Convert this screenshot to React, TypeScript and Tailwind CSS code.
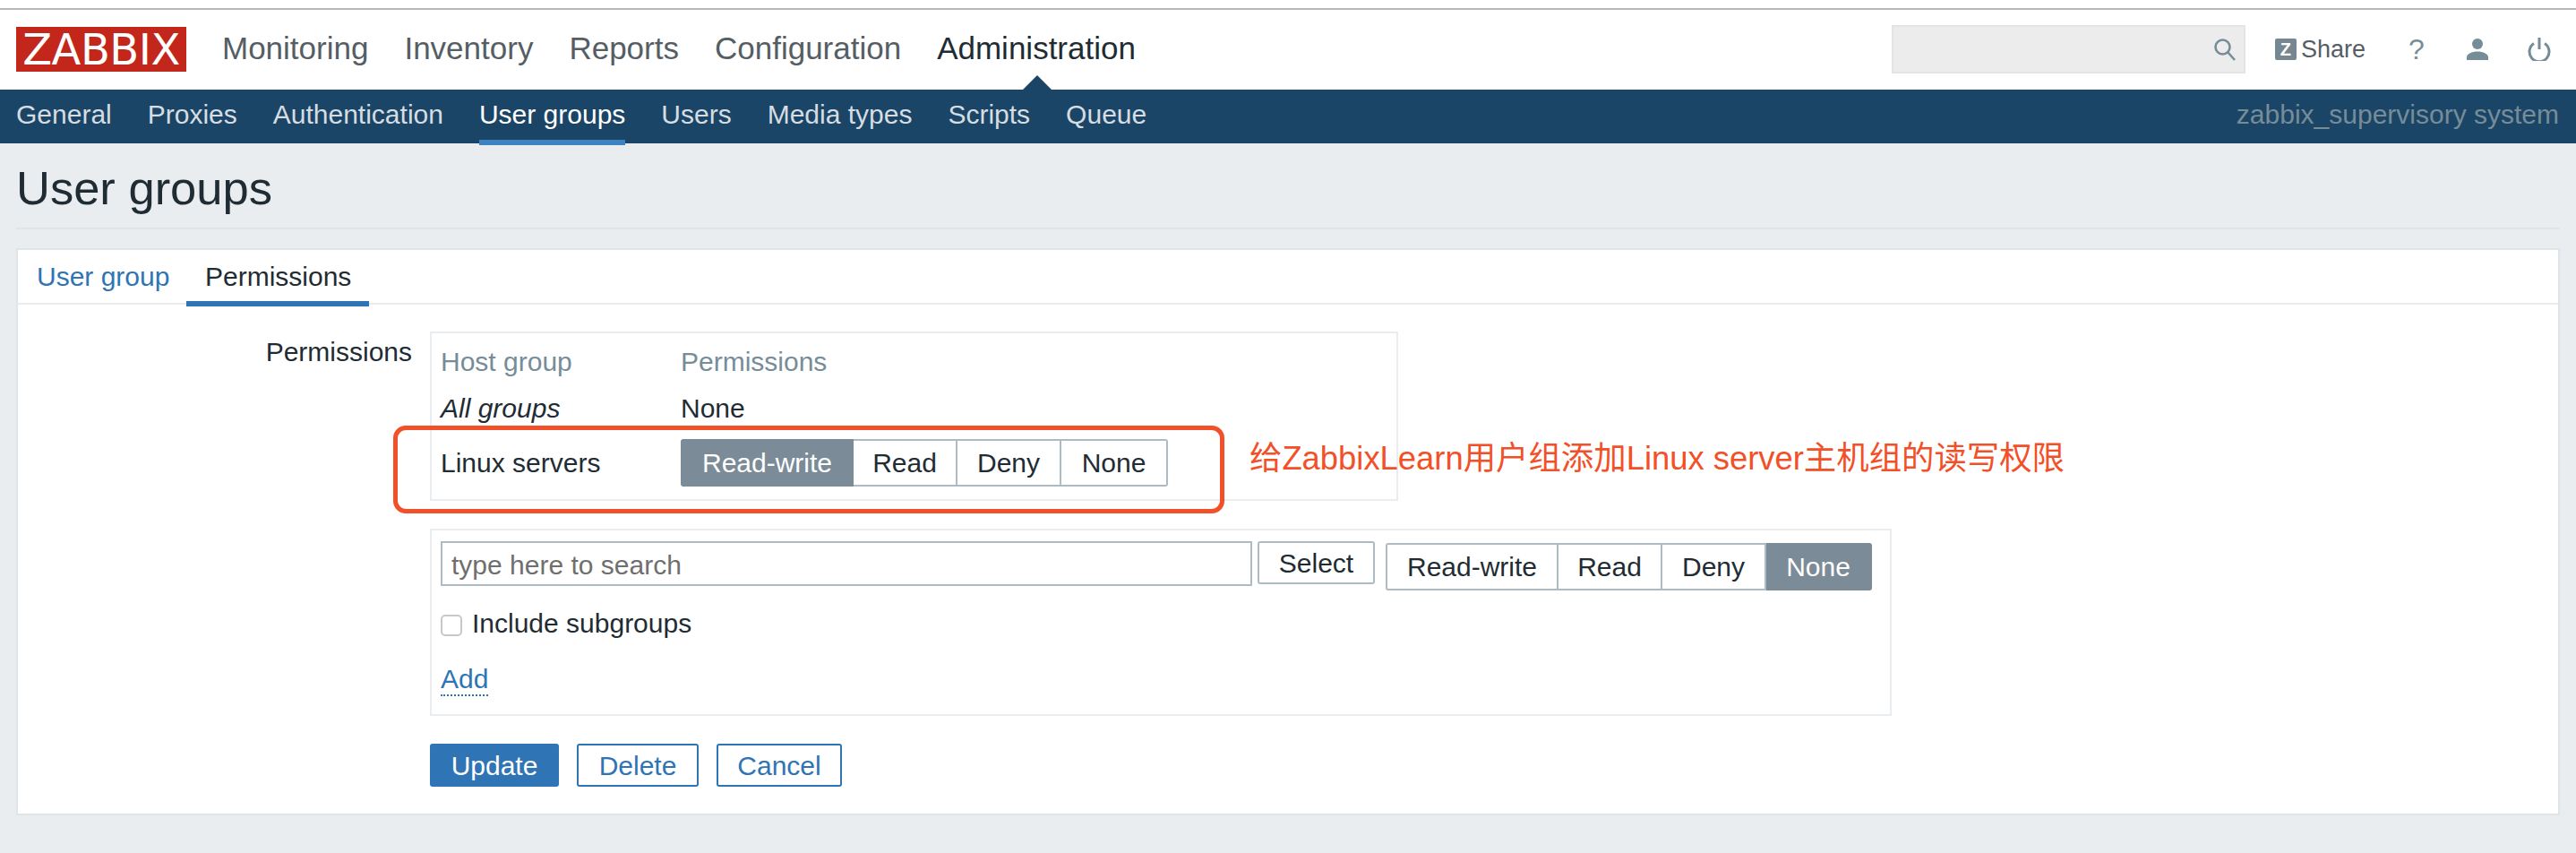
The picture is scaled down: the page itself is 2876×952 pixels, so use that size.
import React from "react";

const F = '"Liberation Sans", Arial, "Noto Sans CJK SC", sans-serif';

function Seg({ items, active }: { items: { t: string; w: number }[]; active: string }) {
  return (
    <div className="flex h-[53px]">
      {items.map((it, i) => (
        <div
          key={it.t}
          style={{ width: it.w }}
          className={
            "flex items-center justify-center text-[30px] border-y-2 " +
            (i === 0 ? "rounded-l-[3px] border-l-2 " : "") +
            (i === items.length - 1 ? "rounded-r-[3px] border-r-2 " : "border-r-2 ") +
            (it.t === active
              ? "bg-[#7b8b97] border-[#7b8b97] text-white"
              : "bg-white border-[#acbbc4] text-[#1f2c33]")
          }
        >
          {it.t}
        </div>
      ))}
    </div>
  );
}

export default function App() {
  return (
    <div className="relative w-[2876px] h-[952px] bg-[#e9edf0] overflow-hidden" style={{ fontFamily: F }}>
      <div className="h-[9px] bg-white" />
      <div className="h-[91px] bg-white border-t-2 border-[#b8b8b8] flex items-center pl-[18px] pr-[28px] relative">
        <div className="w-[190px] h-[50px] bg-[#c3261a] text-white flex items-center justify-center text-[48px] leading-none tracking-[-0.5px] mt-[-1px]" style={{ fontFamily: '"DejaVu Sans", sans-serif' }}>
          ZABBIX
        </div>
        <div className="flex gap-[40px] ml-[40px] text-[35px] text-[#555e65] mt-[-2px]">
          <span>Monitoring</span>
          <span>Inventory</span>
          <span>Reports</span>
          <span>Configuration</span>
          <span className="text-[#1f2c33]">Administration</span>
        </div>
        <div className="absolute left-[1142px] bottom-0 w-0 h-0 border-x-[16px] border-x-transparent border-b-[16px] border-b-[#1b4566]" />
        <div className="ml-auto flex items-center mt-[-1px]">
          <div className="w-[395px] h-[54px] bg-[#ececec] border-2 border-[#e4e4e4] flex items-center justify-end pr-[8px]">
            <svg width="26" height="26" viewBox="0 0 26 26" fill="none" stroke="#768d99" strokeWidth="2.6">
              <circle cx="10.5" cy="10.5" r="8" />
              <path d="M16 16l8 9" />
            </svg>
          </div>
          <div className="flex items-center ml-[33px]">
            <div className="w-[24px] h-[24px] rounded-[2px] bg-[#768791] text-white text-[20px] font-bold flex items-center justify-center leading-none">Z</div>
            <span className="ml-[5px] text-[27px] text-[#555e65]">Share</span>
          </div>
          <span className="ml-[48px] text-[32px] text-[#768d99] w-[16px] text-center">?</span>
          <svg className="ml-[48px]" width="26" height="24" viewBox="0 0 26 24" fill="#768d99">
            <circle cx="13" cy="6" r="6" />
            <path d="M1 24v-3c0-4 6-6.500 12-6.500S25 17 25 21v3z" />
          </svg>
          <svg className="ml-[43px]" width="26" height="26" viewBox="0 0 26 26" fill="none" stroke="#768d99" strokeWidth="3">
            <path d="M7 6.500a11 11 0 1 0 12 0" />
            <path d="M13 0v13" />
          </svg>
        </div>
      </div>

      <div className="h-[60px] bg-[#1b4566] flex items-start pl-[18px] pr-[19px] text-[30px] text-[#d5dde3] relative">
        <div className="flex gap-[40px] h-[62px]">
          {["General", "Proxies", "Authentication", "User groups", "Users", "Media types", "Scripts", "Queue"].map((t) => (
            <span
              key={t}
              className={
                "pt-[11px] leading-[34px] " +
                (t === "User groups" ? "text-white border-b-[6px] border-[#3d82c2] h-[62px]" : "")
              }
            >
              {t}
            </span>
          ))}
        </div>
        <span className="ml-auto pt-[11px] leading-[34px] text-[#768d99]">zabbix_supervisory system</span>
      </div>

      <div className="mx-[18px]">
        <div className="h-[96px] border-b-2 border-[#dfe4e7] text-[52.500px] leading-[60px] pt-[20px] text-[#1f2c33]">User groups</div>
        <div className="mt-[21px] h-[633px] bg-white border-2 border-[#dfe4e7]">
          <div className="h-[61px] border-b-2 border-[#e9edf0] flex text-[30px] relative">
            <span className="w-[188px] pl-[21px] pt-[13px] text-[#2f74b4] leading-[34px]">User group</span>
            <span className="w-[204px] h-[63px] pl-[21px] pt-[13px] leading-[34px] text-[#1f2c33] border-b-[6px] border-[#2f74b4]">Permissions</span>
          </div>

          <div className="flex pt-[30px] text-[30px] text-[#1f2c33]">
            <div className="w-[440px] text-right pr-0 leading-[34px] pt-[6px]">Permissions</div>
            <div className="ml-[20px]">
              <div className="w-[1081px] h-[189px] border-2 border-[#e9edf0] pl-[10px]">
                <div className="flex pt-[15px] leading-[34px] text-[#768d99]">
                  <span className="w-[268px]">Host group</span>
                  <span>Permissions</span>
                </div>
                <div className="flex pt-[18px] leading-[34px]">
                  <span className="w-[268px] italic">All groups</span>
                  <span>None</span>
                </div>
                <div className="flex items-center mt-[17px]">
                  <span className="w-[268px]">Linux servers</span>
                  <Seg
                    active="Read-write"
                    items={[
                      { t: "Read-write", w: 193 },
                      { t: "Read", w: 116 },
                      { t: "Deny", w: 116 },
                      { t: "None", w: 119 },
                    ]}
                  />
                </div>
              </div>

              <div className="mt-[31px] w-[1632px] h-[209px] border-2 border-[#e9edf0] pl-[10px] pt-[12px]">
                <div className="flex items-start">
                  <div className="w-[906px] h-[50px] border-2 border-[#acbbc4] pl-[10px] text-[#6f6f6f] leading-[50px]">type here to search</div>
                  <div className="ml-[6px] w-[131px] h-[48px] border-2 border-[#acbbc4] rounded-[3px] flex items-center justify-center">Select</div>
                  <div className="ml-[12px] mt-[2px]">
                    <Seg
                      active="None"
                      items={[
                        { t: "Read-write", w: 193 },
                        { t: "Read", w: 116 },
                        { t: "Deny", w: 116 },
                        { t: "None", w: 118 },
                      ]}
                    />
                  </div>
                </div>
                <div className="flex items-center mt-[19px] h-[34px]">
                  <div className="w-[24px] h-[24px] border-2 border-[#c8c8c8] rounded-[5px] bg-white mt-[6px]" />
                  <span className="ml-[11px]">Include subgroups</span>
                </div>
                <div className="mt-[23px]">
                  <span className="text-[#2f74b4] border-b-2 border-dotted border-[#2f74b4] leading-[34px] inline-block">Add</span>
                </div>
              </div>

              <div className="flex gap-[20px] mt-[31px]">
                <div className="w-[144px] h-[48px] rounded-[3px] bg-[#2f74b4] text-white flex items-center justify-center">Update</div>
                <div className="w-[136px] h-[48px] rounded-[3px] border-2 border-[#2f74b4] text-[#2f74b4] flex items-center justify-center">Delete</div>
                <div className="w-[140px] h-[48px] rounded-[3px] border-2 border-[#2f74b4] text-[#2f74b4] flex items-center justify-center">Cancel</div>
              </div>
            </div>
          </div>
        </div>
      </div>

      <div className="absolute left-[439px] top-[475px] w-[928px] h-[98px] border-[5px] border-[#f25028] rounded-[14px]" />
      <div className="absolute left-[1395px] top-[487px] text-[36.4px] leading-[50px] whitespace-nowrap text-[#f25028]">给ZabbixLearn用户组添加Linux server主机组的读写权限</div>
    </div>
  );
}
